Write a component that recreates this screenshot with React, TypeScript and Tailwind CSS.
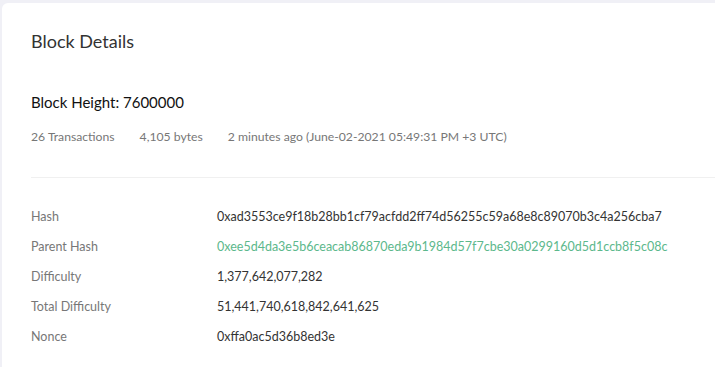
const rows: { label: string; value: string; link?: boolean }[] = [
  { label: "Hash", value: "0xad3553ce9f18b28bb1cf79acfdd2ff74d56255c59a68e8c89070b3c4a256cba7" },
  {
    label: "Parent Hash",
    value: "0xee5d4da3e5b6ceacab86870eda9b1984d57f7cbe30a0299160d5d1ccb8f5c08c",
    link: true,
  },
  { label: "Difficulty", value: "1,377,642,077,282" },
  { label: "Total Difficulty", value: "51,441,740,618,842,641,625" },
  { label: "Nonce", value: "0xffa0ac5d36b8ed3e" },
];

export default function App() {
  return (
    <div
      className="h-[367px] w-[715px] overflow-hidden bg-[#f0f0f6] pl-[2px] pt-[3px]"
      style={{ fontFamily: "Lato, 'Noto Sans', sans-serif" }}>
      <div className="h-full rounded-tl-[6px] bg-white pl-[29px] pt-[27px]">
        <h1 className="text-[18px] leading-[22px] text-[#333]">Block Details</h1>

        <div className="mt-[41px] text-[15px] leading-[18px] text-[#111]">
          Block Height: 7600000
        </div>
        <div className="mt-[18px] flex gap-[25px] text-[12.2px] leading-[16px] text-[#777]">
          <span>26 Transactions</span>
          <span>4,105 bytes</span>
          <span>2 minutes ago (June-02-2021 05:49:31 PM +3 UTC)</span>
        </div>

        <div className="mt-[32px] h-px bg-[#f0f0f0]" />

        <div className="mt-[24px] flex flex-col">
          {rows.map((r) => (
            <div key={r.label} className="flex h-[30px] items-center text-[12.5px]">
              <span className="w-[186px] shrink-0 text-[#777]">{r.label}</span>
              <span className={r.link ? "text-[#5cb88c]" : "text-[#333]"}>{r.value}</span>
            </div>
          ))}
        </div>
      </div>
    </div>
  );
}
